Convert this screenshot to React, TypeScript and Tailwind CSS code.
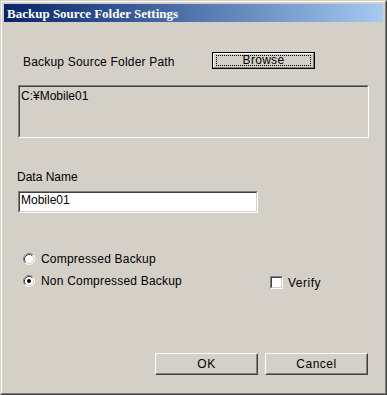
import React from "react";

const face = "bg-[#d4d0c8]";

function Radio({ checked }: { checked?: boolean }) {
  // classic win2000 radio: grey/black upper-left arcs, white/face lower-right arcs
  return (
    <svg width="12" height="12" viewBox="0 0 12 12" className="shrink-0">
      <circle cx="6" cy="6" r="5" fill="#ffffff" />
      <path d="M2.11 9.89 A5.5 5.5 0 0 1 9.89 2.11" fill="none" stroke="#808080" strokeWidth="1" />
      <path d="M9.89 2.11 A5.5 5.5 0 0 1 2.11 9.89" fill="none" stroke="#ffffff" strokeWidth="1" />
      <path d="M2.82 9.18 A4.5 4.5 0 0 1 9.18 2.82" fill="none" stroke="#404040" strokeWidth="1" />
      <path d="M9.18 2.82 A4.5 4.5 0 0 1 2.82 9.18" fill="none" stroke="#d4d0c8" strokeWidth="1" />
      {checked && <circle cx="6" cy="6" r="2" fill="#000000" />}
    </svg>
  );
}

function Sunken({ className, children }: { className?: string; children?: React.ReactNode }) {
  return (
    <div className={`border border-t-[#808080] border-l-[#808080] border-r-white border-b-white ${className ?? ""}`}>
      <div className="h-full border border-t-[#404040] border-l-[#404040] border-r-[#d4d0c8] border-b-[#d4d0c8]">
        {children}
      </div>
    </div>
  );
}

function PushButton({ label }: { label: string }) {
  return (
    <div className="w-[103px] h-[22px] border border-t-white border-l-white border-r-[#404040] border-b-[#404040]">
      <div className="h-full border border-t-[#d4d0c8] border-l-[#d4d0c8] border-r-[#808080] border-b-[#808080] flex items-center justify-center tracking-[0.5px]">
        {label}
      </div>
    </div>
  );
}

export default function App() {
  return (
    <div
      className={`w-[387px] h-[395px] ${face} border border-t-[#d4d0c8] border-l-[#d4d0c8] border-r-[#404040] border-b-[#404040] text-black text-[12px] leading-[14px]`}
      style={{ fontFamily: '"Liberation Sans", Arial, sans-serif' }}
    >
      <div className="h-full border border-t-white border-l-white border-r-[#808080] border-b-[#808080] p-[2px] flex flex-col">
        {/* === TITLE BAR === */}
        <div className="h-[18px] shrink-0 bg-gradient-to-r from-[#0a246a] to-[#a6caf0] flex items-center pl-[3px]">
          <span
            className="text-white font-bold text-[13px] leading-none"
            style={{ fontFamily: '"Liberation Serif", "Times New Roman", serif' }}
          >
            Backup Source Folder Settings
          </span>
        </div>

        {/* === SOURCE PATH === */}
        <div className="mt-[30px] flex items-center pl-[19px]">
          <div className="w-[189px] pt-[2px] tracking-[0.2px]">Backup Source Folder Path</div>
          <div className="w-[103px] h-[17px] border border-black">
            <div className="h-full border border-t-white border-l-white border-r-[#808080] border-b-[#808080] px-[2px] py-[1px]">
              <div className="h-full border border-dotted border-black flex items-start justify-center leading-[9px] tracking-[0.3px]">
                Browse
              </div>
            </div>
          </div>
        </div>

        <Sunken className="mt-[16px] ml-[14px] w-[351px] h-[53px]">
          <div className="pl-[1px] pt-[2px]">C:¥Mobile01</div>
        </Sunken>

        {/* === DATA NAME === */}
        <div className="mt-[32px] ml-[13px]">Data Name</div>
        <Sunken className="mt-[7px] ml-[14px] w-[240px] h-[22px]">
          <div className="h-full bg-white pl-[1px]">Mobile01</div>
        </Sunken>

        {/* === OPTIONS === */}
        <div className="mt-[38px] ml-[19px] h-[16px] flex items-center gap-[6px]">
          <Radio />
          <span className="tracking-[0.2px]">Compressed Backup</span>
        </div>
        <div className="mt-[6px] ml-[19px] h-[16px] flex items-center">
          <Radio checked />
          <span className="ml-[6px] w-[229px] tracking-[0.2px]">Non Compressed Backup</span>
          <div className="mt-[3px] flex items-center gap-[5px]">
            <Sunken className="w-[13px] h-[13px]">
              <div className="h-full bg-white" />
            </Sunken>
            <span className="tracking-[0.5px]">Verify</span>
          </div>
        </div>

        {/* === BUTTONS === */}
        <div className="mt-[64px] ml-[151px] flex gap-[7px]">
          <PushButton label="OK" />
          <PushButton label="Cancel" />
        </div>
      </div>
    </div>
  );
}
